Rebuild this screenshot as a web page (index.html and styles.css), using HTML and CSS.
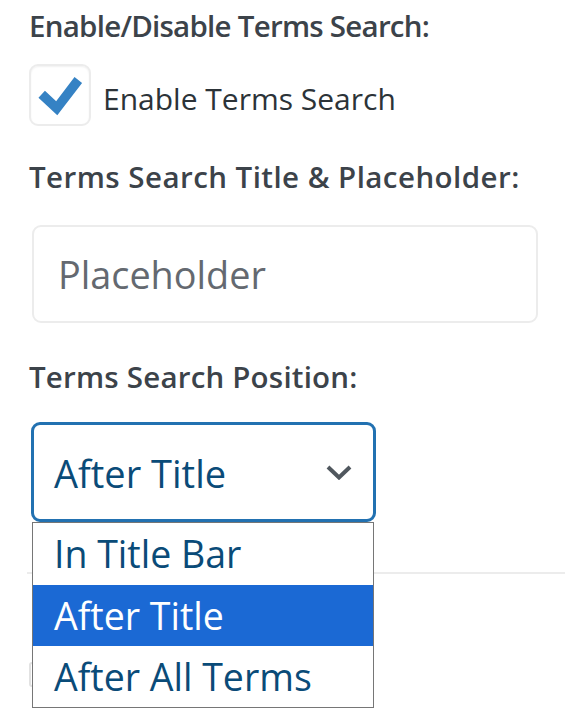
FILE: index.html
```html
<!DOCTYPE html>
<html>
<head>
<meta charset="utf-8">
<link rel="stylesheet" href="styles.css">
</head>
<body>
<div class="page">
  <div class="field-title t1">Enable/Disable Terms Search:</div>
  <label class="check-row">
    <span class="checkbox">
      <svg width="62" height="62" viewBox="0 0 62 62"><polyline points="12.7,30.3 27.7,44.3 49.3,16" fill="none" stroke="#3582c4" stroke-width="9.5" stroke-linejoin="miter"/></svg>
    </span>
    <span class="check-label">Enable Terms Search</span>
  </label>
  <div class="field-title t2">Terms Search Title &amp; Placeholder:</div>
  <input class="text-input" type="text" placeholder="Placeholder">
  <div class="field-title t3">Terms Search Position:</div>
  <div class="select-wrap">
    <div class="select">
      <span class="select-value">After Title</span>
      <svg class="chev" width="26" height="15" viewBox="0 0 26 15"><polyline points="2,2 13,12.5 24,2" fill="none" stroke="#50575e" stroke-width="4"/></svg>
    </div>
    <ul class="dropdown">
      <li class="option">In Title Bar</li>
      <li class="option selected">After Title</li>
      <li class="option">After All Terms</li>
    </ul>
  </div>
  <div class="divider"></div>
  <div class="hidden-box"></div>
</div>
</body>
</html>
```
FILE: styles.css
```css
html, body {
  margin: 0;
  padding: 0;
  background: #ffffff;
}
body {
  min-height: 715px;
}
.page {
  padding-left: 29px;
  min-height: 715px;
  font-family: "Open Sans", "Noto Sans", sans-serif;
  color: #3c434a;
}
.field-title {
  font-size: 29.5px;
  font-weight: 600;
  line-height: 52px;
  height: 52px;
  white-space: nowrap;
  color: #3c434a;
}
.t1 {
  letter-spacing: -0.75px;
}
.check-row {
  display: flex;
  align-items: center;
  gap: 12px;
  margin-top: 12px;
  height: 62px;
}
.checkbox {
  box-sizing: border-box;
  width: 62px;
  height: 62px;
  border: 2px solid #ececec;
  border-radius: 9px;
  background: #fff;
  box-shadow: inset 0 1px 2px rgba(0,0,0,0.06);
  display: flex;
  align-items: center;
  justify-content: center;
}
.checkbox svg {
  display: block;
  flex: none;
}
.check-label {
  font-size: 30px;
  color: #2c3338;
  line-height: 62px;
  padding-top: 8px;
}
.t2 {
  margin-top: 25px;
  letter-spacing: 0.45px;
}
.text-input {
  display: block;
  box-sizing: border-box;
  margin: 22px 0 0 3px;
  width: 506px;
  height: 98px;
  border: 2px solid #ececec;
  border-radius: 9px;
  padding: 0 0 0 24px;
  font-family: "Open Sans", "Noto Sans", sans-serif;
  font-size: 37.8px;
  color: #2c3338;
  outline: none;
  background: #fff;
}
.text-input::placeholder {
  color: #646970;
}
.t3 {
  margin-top: 28px;
  letter-spacing: 0.2px;
}
.select-wrap {
  position: relative;
  margin: 19px 0 0 2px;
  width: 345px;
  height: 100px;
}
.select {
  box-sizing: border-box;
  height: 100px;
  border: 3px solid #2271b1;
  border-radius: 9px;
  padding: 0 21px 0 20px;
  display: flex;
  align-items: center;
  justify-content: space-between;
  background: #fff;
}
.select-value {
  font-size: 38px;
  color: #0a4b78;
  padding-top: 2px;
}
.chev {
  display: block;
}
.dropdown {
  position: absolute;
  top: 100px;
  left: 1px;
  box-sizing: border-box;
  width: 342px;
  margin: 0;
  padding: 0;
  list-style: none;
  border: 1px solid #767676;
  background: #fff;
  z-index: 2;
}
.option {
  height: 61px;
  line-height: 61px;
  padding-left: 21px;
  font-size: 37.5px;
  color: #0a4b78;
  white-space: nowrap;
}
.option:first-child {
  height: 62px;
}
.option.selected {
  background: #1b69d4;
  color: #ffffff;
}
.divider {
  margin: 50px 0 0 -2px;
  height: 2px;
  background: #ececec;
}
.hidden-box {
  margin-top: 88px;
  width: 300px;
  height: 25px;
  box-sizing: border-box;
  border: 2px solid #e2e2e2;
  border-radius: 3px;
}
```
